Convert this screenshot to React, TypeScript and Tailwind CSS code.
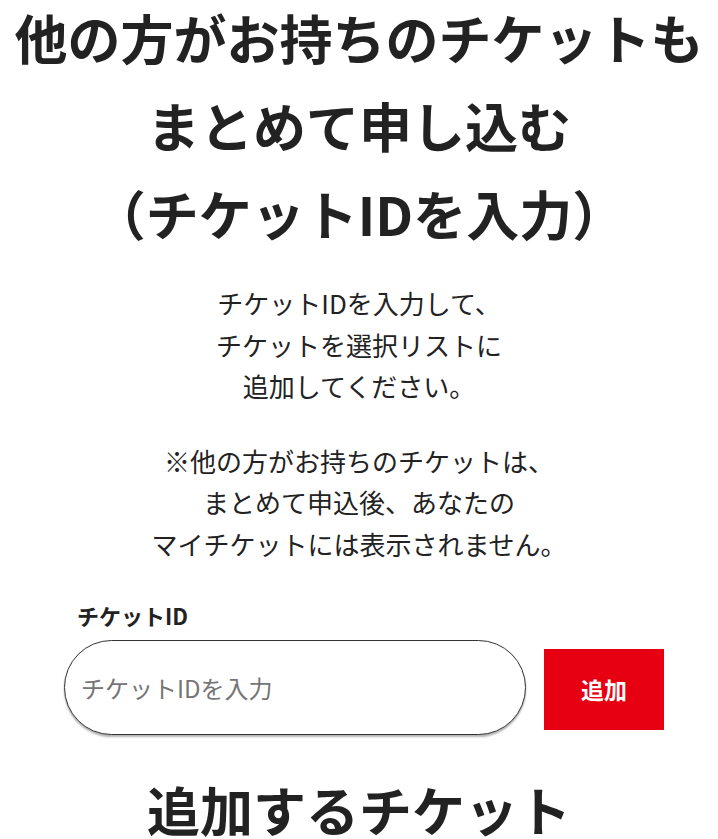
import { useState } from 'react'

const font = '"Noto Sans CJK JP", "Noto Sans", sans-serif'

export default function App() {
  const [ticketId, setTicketId] = useState('')

  return (
    <div className="min-h-screen bg-white text-[#222]" style={{ fontFamily: font }}>
      {/* Page title */}
      <h1 className="mt-[-7px] text-center text-[53px] font-bold leading-[88px]">
        他の方がお持ちのチケットも
        <br />
        まとめて申し込む
        <br />
        （チケットIDを入力）
      </h1>

      {/* Description */}
      <div className="mt-[25px] text-center text-[26px] leading-[41.5px]">
        <p>
          チケットIDを入力して、
          <br />
          チケットを選択リストに
          <br />
          追加してください。
        </p>
        <p className="mt-[33px]">
          ※他の方がお持ちのチケットは、
          <br />
          まとめて申込後、あなたの
          <br />
          マイチケットには表示されません。
        </p>
      </div>

      {/* Ticket ID form */}
      <div className="ml-[64px] mt-[36px] w-[600px]">
        <label htmlFor="ticket-id" className="block pl-[13px] text-[22px] font-bold leading-[30px]">
          チケットID
        </label>
        <div className="mt-[10px] flex items-start gap-[18px]">
          <input
            id="ticket-id"
            type="text"
            value={ticketId}
            onChange={(e) => setTicketId(e.target.value)}
            placeholder="チケットIDを入力"
            className="h-[95px] w-[462px] rounded-full border border-[#333] bg-white px-[16px] text-[24px] text-[#222] shadow-[0_2px_2px_rgba(0,0,0,0.3)] outline-none placeholder:text-[#757575]"
          />
          <button
            type="button"
            className="mt-[9px] h-[81px] w-[120px] bg-[#e60012] text-[23px] font-bold text-white"
          >
            追加
          </button>
        </div>
      </div>

      {/* Selected tickets */}
      <h2 className="mt-[30px] text-center text-[53px] font-bold leading-[88px]">追加するチケット</h2>
    </div>
  )
}
